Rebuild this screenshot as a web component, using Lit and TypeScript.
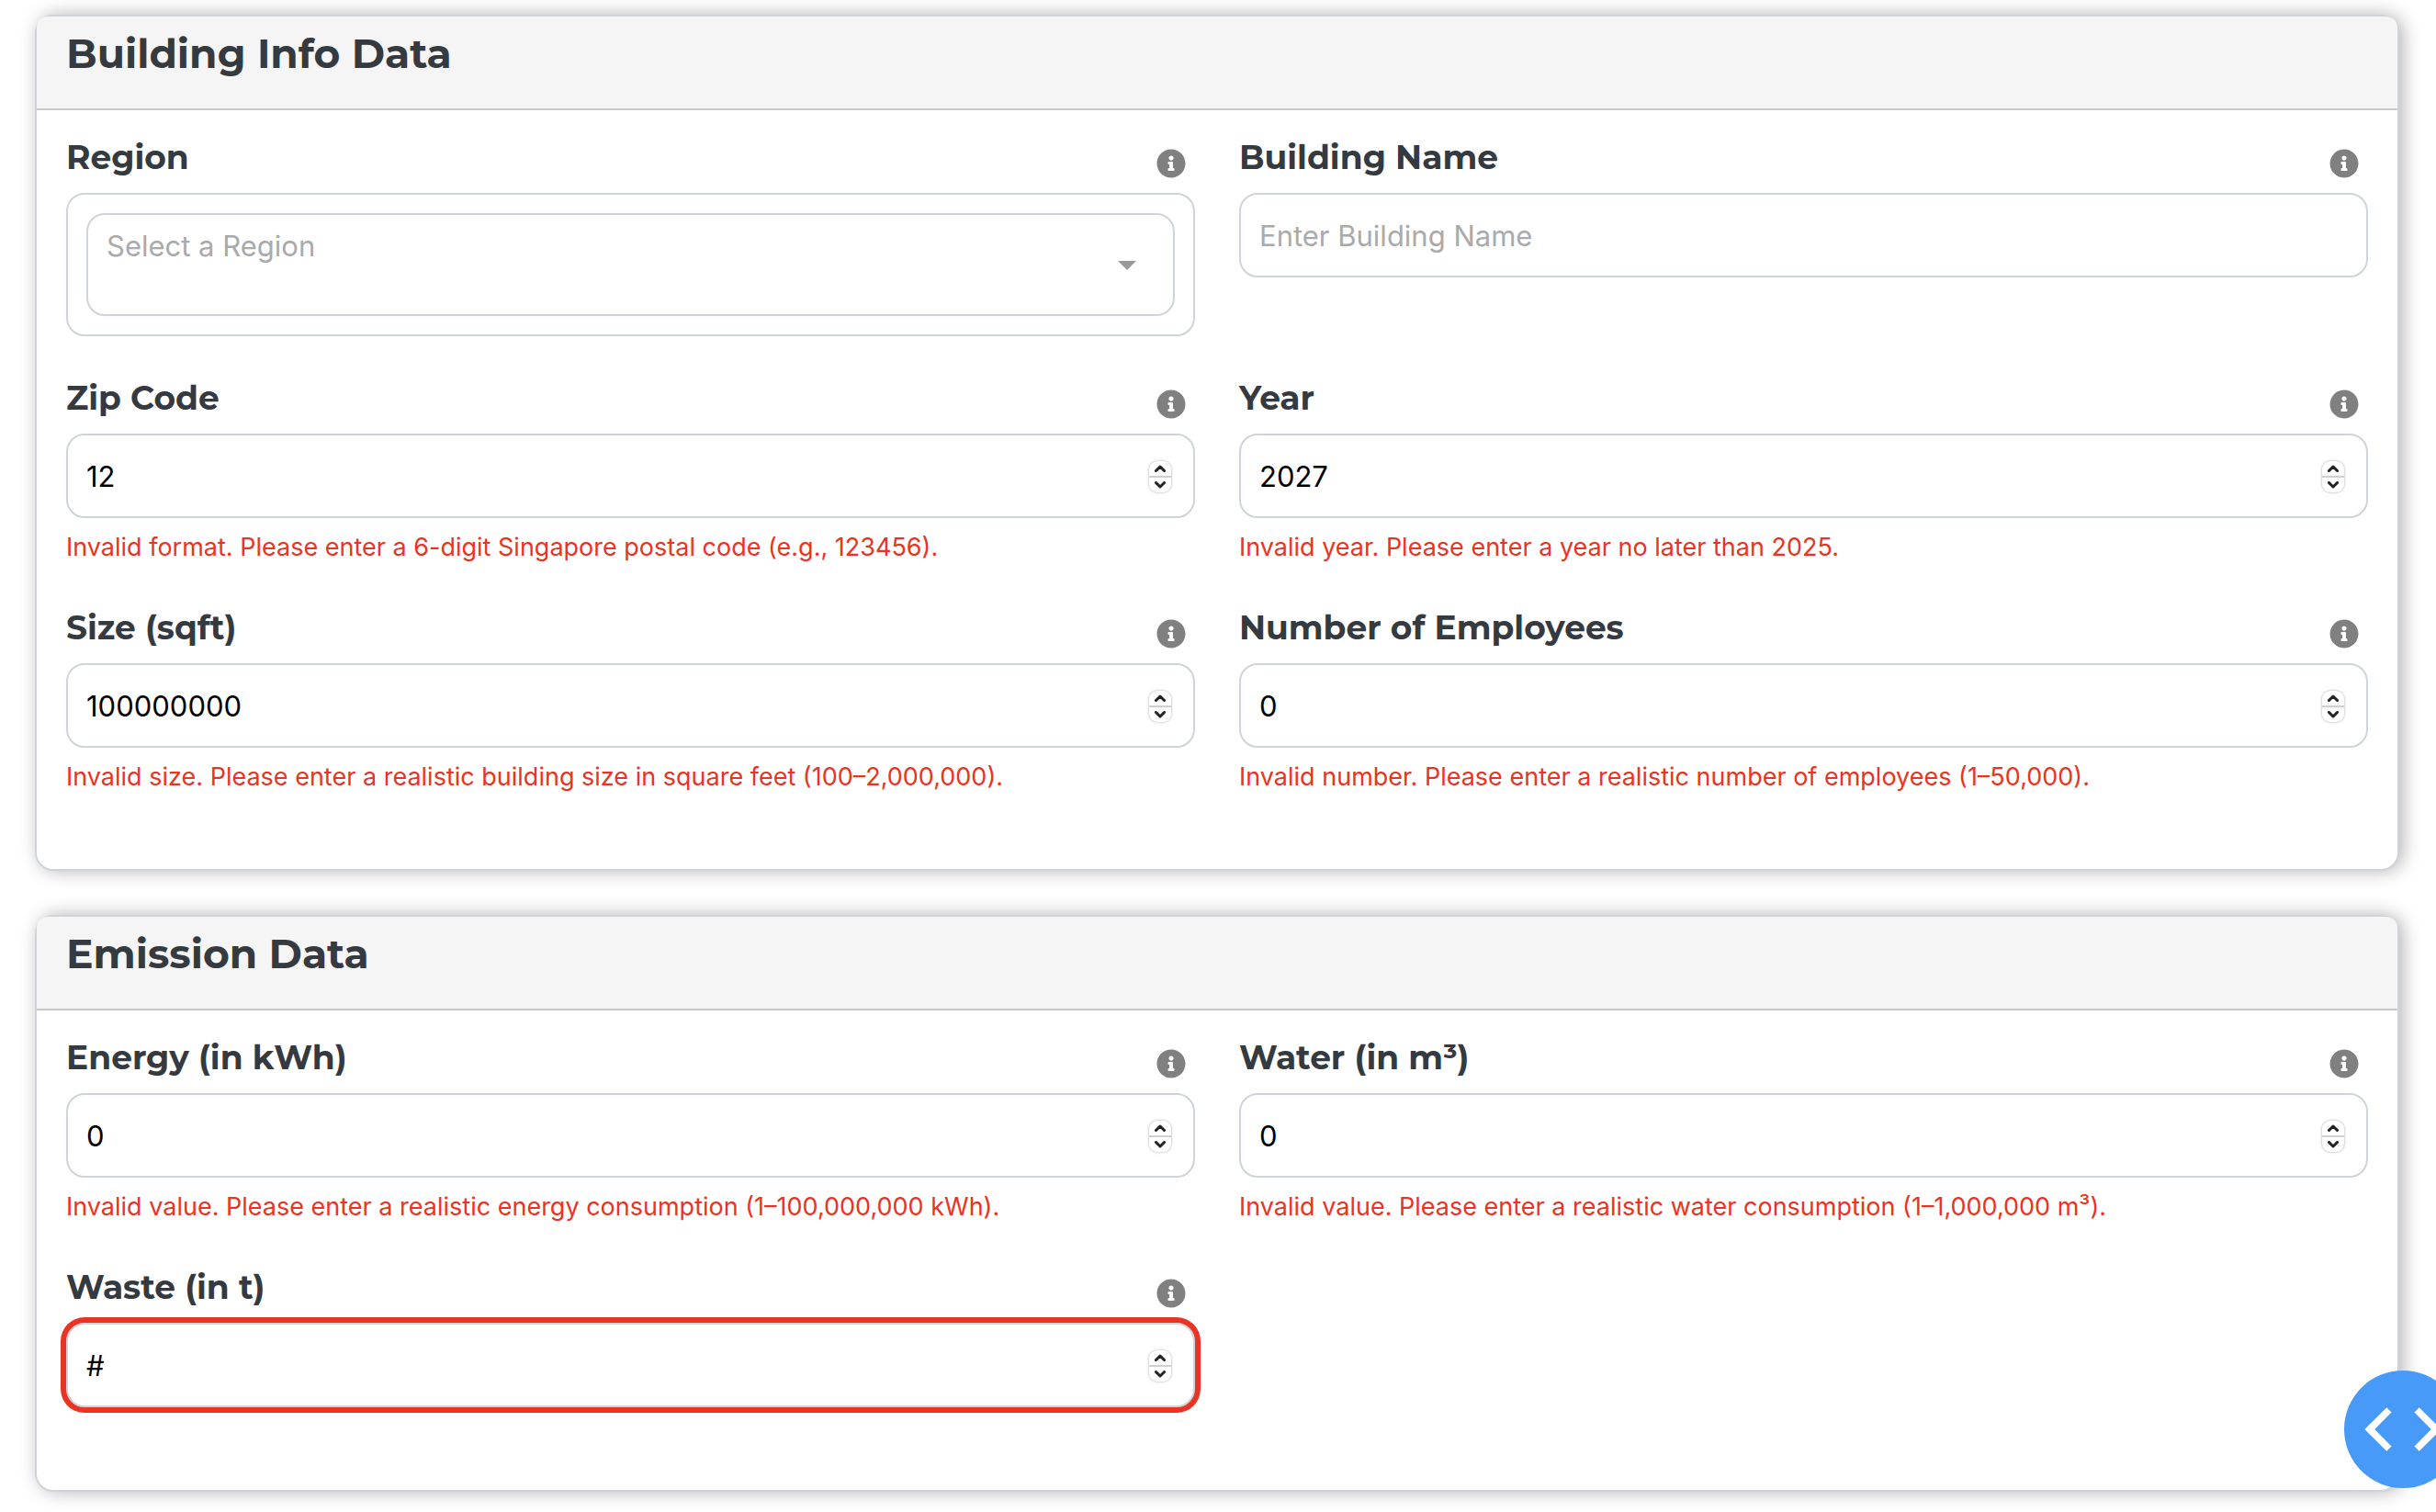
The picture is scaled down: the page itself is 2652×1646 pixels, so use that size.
import { LitElement, html, css, svg, nothing } from "lit";
import { customElement, property } from "lit/decorators.js";

interface Field {
  id: string;
  label: string;
  kind: "select" | "text" | "number";
  value?: string;
  placeholder?: string;
  error?: string;
  active?: boolean;
}

interface Section {
  title: string;
  fields: Field[];
}

const SECTIONS: Section[] = [
  {
    title: "Building Info Data",
    fields: [
      { id: "region", label: "Region", kind: "select", placeholder: "Select a Region" },
      { id: "building-name", label: "Building Name", kind: "text", placeholder: "Enter Building Name" },
      {
        id: "zip-code", label: "Zip Code", kind: "number", value: "12",
        error: "Invalid format. Please enter a 6-digit Singapore postal code (e.g., 123456).",
      },
      {
        id: "year", label: "Year", kind: "number", value: "2027",
        error: "Invalid year. Please enter a year no later than 2025.",
      },
      {
        id: "size", label: "Size (sqft)", kind: "number", value: "100000000",
        error: "Invalid size. Please enter a realistic building size in square feet (100–2,000,000).",
      },
      {
        id: "employees", label: "Number of Employees", kind: "number", value: "0",
        error: "Invalid number. Please enter a realistic number of employees (1–50,000).",
      },
    ],
  },
  {
    title: "Emission Data",
    fields: [
      {
        id: "energy", label: "Energy (in kWh)", kind: "number", value: "0",
        error: "Invalid value. Please enter a realistic energy consumption (1–100,000,000 kWh).",
      },
      {
        id: "water", label: "Water (in m³)", kind: "number", value: "0",
        error: "Invalid value. Please enter a realistic water consumption (1–1,000,000 m³).",
      },
      { id: "waste", label: "Waste (in t)", kind: "number", value: "#", active: true },
    ],
  },
];

const INFO_PATH = svg`<path fill="currentColor" d="M256 8C119.043 8 8 119.083 8 256c0 136.997 111.043 248 248 248s248-111.003 248-248C504 119.083 392.957 8 256 8zm0 110c23.196 0 42 18.804 42 42s-18.804 42-42 42-42-18.804-42-42 18.804-42 42-42zm56 254c0 6.627-5.373 12-12 12h-88c-6.627 0-12-5.373-12-12v-24c0-6.627 5.373-12 12-12h12v-64h-12c-6.627 0-12-5.373-12-12v-24c0-6.627 5.373-12 12-12h64c6.627 0 12 5.373 12 12v100h12c6.627 0 12 5.373 12 12v24z"/>`;

@customElement("form-field")
export class FormField extends LitElement {
  @property({ attribute: false }) field!: Field;

  static styles = css`
    :host {
      display: block;
      min-height: 168px;
      min-width: 0;
    }
    .head {
      display: flex;
      justify-content: space-between;
      align-items: flex-start;
      height: 66px;
      padding-right: 10px;
      box-sizing: border-box;
    }
    .label {
      font: 700 36px/54px "Montserrat", "Inter", sans-serif;
      color: #343a40;
    }
    .info {
      margin-top: 18px;
      padding: 0;
      border: 0;
      background: none;
      color: #808080;
      width: 32px;
      height: 32px;
    }
    .info svg {
      display: block;
      width: 32px;
      height: 32px;
    }
    .box {
      display: flex;
      align-items: center;
      box-sizing: border-box;
      border: 2px solid #ced4da;
      border-radius: 20px;
      background: #fff;
    }
    .single {
      height: 92px;
      padding: 2px 24px 0 20px;
    }
    .active {
      box-shadow: 0 0 0 6px #ea3323;
    }
    .wrap {
      padding: 20px;
    }
    .input {
      flex: 1;
      min-width: 0;
      border: 0;
      padding: 0;
      outline: none;
      background: none;
      color: #000;
      font: 400 31px/40px "Inter", sans-serif;
    }
    .input::placeholder {
      color: #aaa;
      opacity: 1;
    }
    .select-frame {
      display: grid;
      flex: 1;
      min-width: 0;
    }
    .select {
      grid-area: 1 / 1;
      appearance: none;
      width: 100%;
      height: 112px;
      box-sizing: border-box;
      border: 2px solid #ced4da;
      border-radius: 20px;
      padding: 14px 60px 54px 20px;
      background: none;
      color: #aaa;
      font: 400 31px/40px "Inter", sans-serif;
    }
    .caret {
      grid-area: 1 / 1;
      justify-self: end;
      align-self: center;
      width: 20px;
      height: 10px;
      margin: 2px 42px 0 0;
      fill: #999;
      pointer-events: none;
    }
    .spinner {
      display: flex;
      flex-direction: column;
      width: 24px;
      height: 34px;
      border-radius: 9px;
      background: #fff;
      box-shadow: 0 0 3px rgba(0, 0, 0, 0.35);
      overflow: hidden;
    }
    .step {
      flex: 1;
      padding: 0;
      border: 0;
      background: none;
      display: flex;
      align-items: center;
      justify-content: center;
    }
    .down {
      border-top: 2px solid #d0d0d0;
    }
    .step svg {
      width: 12px;
      height: 8px;
      fill: none;
      stroke: #222;
      stroke-width: 3;
      stroke-linecap: round;
      stroke-linejoin: round;
    }
    .error {
      margin: 0;
      height: 52px;
      padding-top: 12px;
      box-sizing: border-box;
      font: 400 27px/40px "Inter", sans-serif;
      color: #ea3323;
      white-space: nowrap;
    }
  `;

  private renderControl(f: Field) {
    if (f.kind === "select") {
      return html`<div class="box wrap">
        <div class="select-frame">
          <select class="select" id=${f.id}>
            <option>${f.placeholder}</option>
          </select>
          <svg class="caret" viewBox="0 0 20 10"><path d="M0 0H20L10 10Z" /></svg>
        </div>
      </div>`;
    }
    const numeric = f.kind === "number";
    return html`<div class="box single ${f.active ? "active" : ""}">
      <input
        class="input"
        id=${f.id}
        type="text"
        inputmode=${numeric ? "numeric" : "text"}
        .value=${f.value ?? ""}
        placeholder=${f.placeholder ?? nothing}
      />
      ${numeric
        ? html`<div class="spinner">
            <button class="step" type="button" aria-label="Increase">
              <svg viewBox="0 0 12 8"><path d="M1.5 6.5L6 2L10.5 6.5" /></svg>
            </button>
            <button class="step down" type="button" aria-label="Decrease">
              <svg viewBox="0 0 12 8"><path d="M1.5 1.5L6 6L10.5 1.5" /></svg>
            </button>
          </div>`
        : nothing}
    </div>`;
  }

  render() {
    const f = this.field;
    return html`
      <div class="head">
        <label class="label" for=${f.id}>${f.label}</label>
        <button class="info" type="button" aria-label="More information">
          <svg viewBox="0 0 512 512">${INFO_PATH}</svg>
        </button>
      </div>
      ${this.renderControl(f)}
      ${f.error ? html`<p class="error">${f.error}</p>` : nothing}
    `;
  }
}

@customElement("app-root")
export class AppRoot extends LitElement {
  static styles = css`
    :host {
      display: block;
      background: #fff;
    }
    .page {
      display: flex;
      flex-direction: column;
      gap: 48px;
      padding: 16px 40px 22px 38px;
    }
    .card {
      border: 2px solid #ced4da;
      border-radius: 20px;
      background: #fff;
      box-shadow: 4px 0 20px rgba(0, 0, 0, 0.3);
    }
    .header {
      box-sizing: border-box;
      height: 102px;
      padding: 12px 32px 0;
      border-bottom: 2px solid #c8c8c8;
      border-radius: 12px 12px 0 0;
      background: #f5f5f5;
    }
    .title {
      margin: 0;
      font: 700 44px/56px "Montserrat", "Inter", sans-serif;
      color: #343a40;
    }
    .body {
      display: grid;
      grid-template-columns: repeat(2, minmax(0, 1fr));
      gap: 40px 48px;
      padding: 24px 32px 80px;
    }
    .fab {
      position: fixed;
      right: -28px;
      bottom: 26px;
      width: 128px;
      height: 128px;
      padding: 0;
      border: 0;
      border-radius: 50%;
      background: #489af9;
    }
    .fab svg {
      display: block;
      width: 128px;
      height: 128px;
      fill: #fff;
    }
  `;

  render() {
    return html`
      <main class="page">
        ${SECTIONS.map(
          (s) => html`<section class="card">
            <header class="header"><h2 class="title">${s.title}</h2></header>
            <div class="body">
              ${s.fields.map((f) => html`<form-field .field=${f}></form-field>`)}
            </div>
          </section>`
        )}
      </main>
      <button class="fab" type="button" aria-label="Developer tools">
        <svg viewBox="0 0 128 128">
          <path d="M46.3 40.3L51.5 45.5L33.2 64L51.5 82.5L46.3 87.7L22.3 64Z" />
          <path d="M81.7 40.3L76.5 45.5L94.8 64L76.5 82.5L81.7 87.7L105.7 64Z" />
        </svg>
      </button>
    `;
  }
}
